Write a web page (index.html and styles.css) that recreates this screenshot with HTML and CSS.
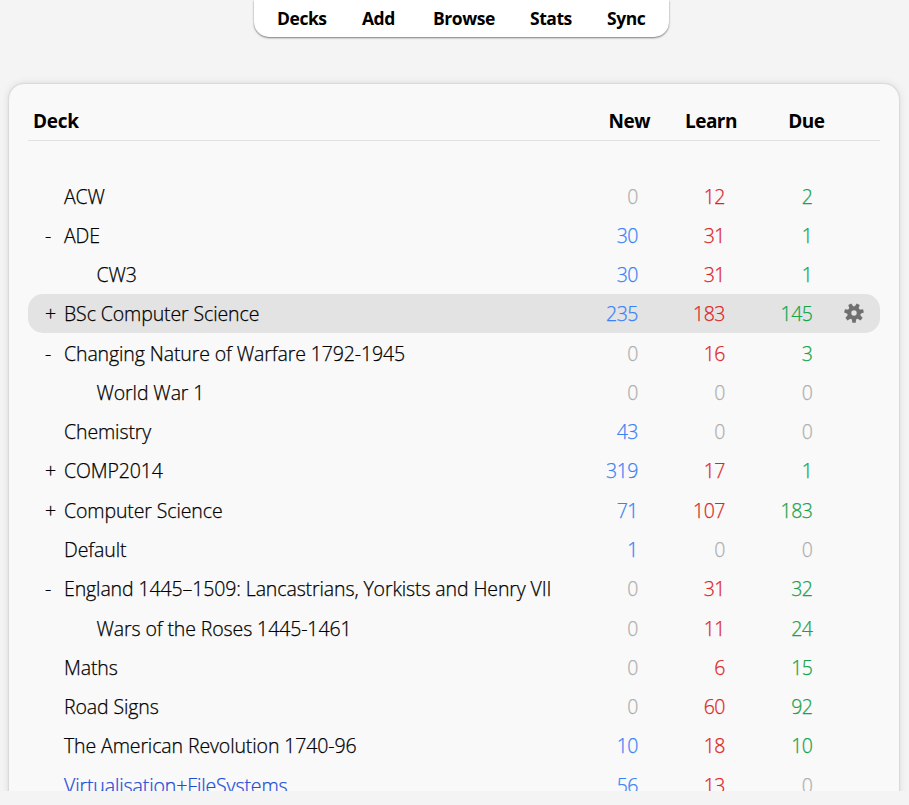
FILE: index.html
```html
<!DOCTYPE html>
<html lang="en">
<head>
<meta charset="utf-8">
<title>Decks</title>
<link rel="stylesheet" href="styles.css">
</head>
<body>
<nav class="toolbar">
<a class="t-decks">Decks</a><a class="t-add">Add</a><a class="t-browse">Browse</a><a class="t-stats">Stats</a><a class="t-sync">Sync</a>
</nav>
<main class="viewport">
<section class="card">
<div class="head"><span class="title">Deck</span><span>New</span><span>Learn</span><span>Due</span></div>
<div class="row"><i></i><b>ACW</b><span class="zero">0</span><span class="learn">12</span><span class="due">2</span></div>
<div class="row"><i>-</i><b>ADE</b><span class="new">30</span><span class="learn">31</span><span class="due">1</span></div>
<div class="row child"><i></i><b>CW3</b><span class="new">30</span><span class="learn">31</span><span class="due">1</span></div>
<div class="row current"><i>+</i><b>BSc Computer Science</b><span class="new">235</span><span class="learn">183</span><span class="due">145</span>
<svg class="gear" viewBox="-10 -10 20 20"><g fill="#707070"><path fill-rule="evenodd" d="M0-6.8A6.8 6.8 0 1 1 0 6.8A6.8 6.8 0 1 1 0-6.8ZM0-2.7A2.7 2.7 0 1 0 0 2.7A2.7 2.7 0 1 0 0-2.7Z"/><path id="tooth" d="M-2.2 5.5H2.2L1.7 9.7H-1.7Z"/><use href="#tooth" transform="rotate(51.43)"/><use href="#tooth" transform="rotate(102.86)"/><use href="#tooth" transform="rotate(154.29)"/><use href="#tooth" transform="rotate(205.71)"/><use href="#tooth" transform="rotate(257.14)"/><use href="#tooth" transform="rotate(308.57)"/></g></svg></div>
<div class="row"><i>-</i><b>Changing Nature of Warfare 1792-1945</b><span class="zero">0</span><span class="learn">16</span><span class="due">3</span></div>
<div class="row child"><i></i><b>World War 1</b><span class="zero">0</span><span class="zero">0</span><span class="zero">0</span></div>
<div class="row"><i></i><b>Chemistry</b><span class="new">43</span><span class="zero">0</span><span class="zero">0</span></div>
<div class="row"><i>+</i><b>COMP2014</b><span class="new">319</span><span class="learn">17</span><span class="due">1</span></div>
<div class="row"><i>+</i><b>Computer Science</b><span class="new">71</span><span class="learn">107</span><span class="due">183</span></div>
<div class="row"><i></i><b>Default</b><span class="new">1</span><span class="zero">0</span><span class="zero">0</span></div>
<div class="row"><i>-</i><b>England 1445–1509: Lancastrians, Yorkists and Henry VII</b><span class="zero">0</span><span class="learn">31</span><span class="due">32</span></div>
<div class="row child"><i></i><b>Wars of the Roses 1445-1461</b><span class="zero">0</span><span class="learn">11</span><span class="due">24</span></div>
<div class="row"><i></i><b>Maths</b><span class="zero">0</span><span class="learn">6</span><span class="due">15</span></div>
<div class="row"><i></i><b>Road Signs</b><span class="zero">0</span><span class="learn">60</span><span class="due">92</span></div>
<div class="row"><i></i><b>The American Revolution 1740-96</b><span class="new">10</span><span class="learn">18</span><span class="due">10</span></div>
<div class="row filtered"><i></i><b>Virtualisation+FileSystems</b><span class="new">56</span><span class="learn">13</span><span class="zero">0</span></div>
</section>
</main>
</body>
</html>
```
FILE: styles.css
```css
* { box-sizing: border-box; }
body {
  margin: 0;
  height: 805px;
  overflow: hidden;
  background: #f4f4f4;
  color: #000;
  font-family: "Open Sans", "Noto Sans", sans-serif;
}
.toolbar {
  width: 415px;
  height: 37px;
  margin-left: 254px;
  padding-left: 23px;
  display: flex;
  gap: 36px;
  background: #fff;
  border-radius: 0 0 15px 15px;
  box-shadow: 0 1px 2px rgba(0, 0, 0, .5);
  font-size: 17.5px;
  font-weight: 700;
  line-height: 37px;
  letter-spacing: -.45px;
  white-space: nowrap;
}
.t-decks { width: 49px; }
.t-add { width: 35px; }
.t-browse { width: 61px; }
.t-stats { width: 41px; }
.viewport {
  height: 754px;
  padding: 47px 10px 0 9px;
  overflow: hidden;
}
.card {
  height: 760px;
  padding: 18px 19px 0 19px;
  background: #f9f9f9;
  border-radius: 15px 15px 0 0;
  box-shadow: 0 0 2px rgba(0, 0, 0, .2), 0 0 8px rgba(0, 0, 0, .12);
}
.head, .row {
  display: grid;
  align-items: center;
  white-space: nowrap;
}
.head {
  grid-template-columns: 523px 99px 87px 87.5px;
  height: 39px;
  margin-bottom: 35.2px;
  border-bottom: 1px solid #e2e2e2;
  font-size: 19px;
  font-weight: 700;
  line-height: 38px;
  letter-spacing: -.5px;
}
.head span { text-align: right; }
.head .title { text-align: left; padding-left: 5px; letter-spacing: -.3px; }
.row {
  grid-template-columns: 17px 19px minmax(0, 1fr) 87px 87px 87.5px 67.5px;
  height: 39.27px;
  padding-top: 1.4px;
  font-size: 19.5px;
  font-weight: 300;
  -webkit-text-stroke: .25px currentColor;
  letter-spacing: -.11px;
  line-height: 37.8px;
}
.row i { grid-column: 2; font-style: normal; }
.row b { grid-column: 3; font-weight: inherit; }
.row span { text-align: right; letter-spacing: -.45px; }
.child b { padding-left: 32.5px; }
.current { background: #e3e3e3; border-radius: 15px; }
.gear { width: 20px; height: 20px; margin: -3px 0 0 31.5px; }
.new { color: #3b82f6; }
.learn { color: #dc2626; }
.due { color: #16a34a; }
.zero { color: #afafaf; }
.filtered b { color: #1d4ed8; }
```
